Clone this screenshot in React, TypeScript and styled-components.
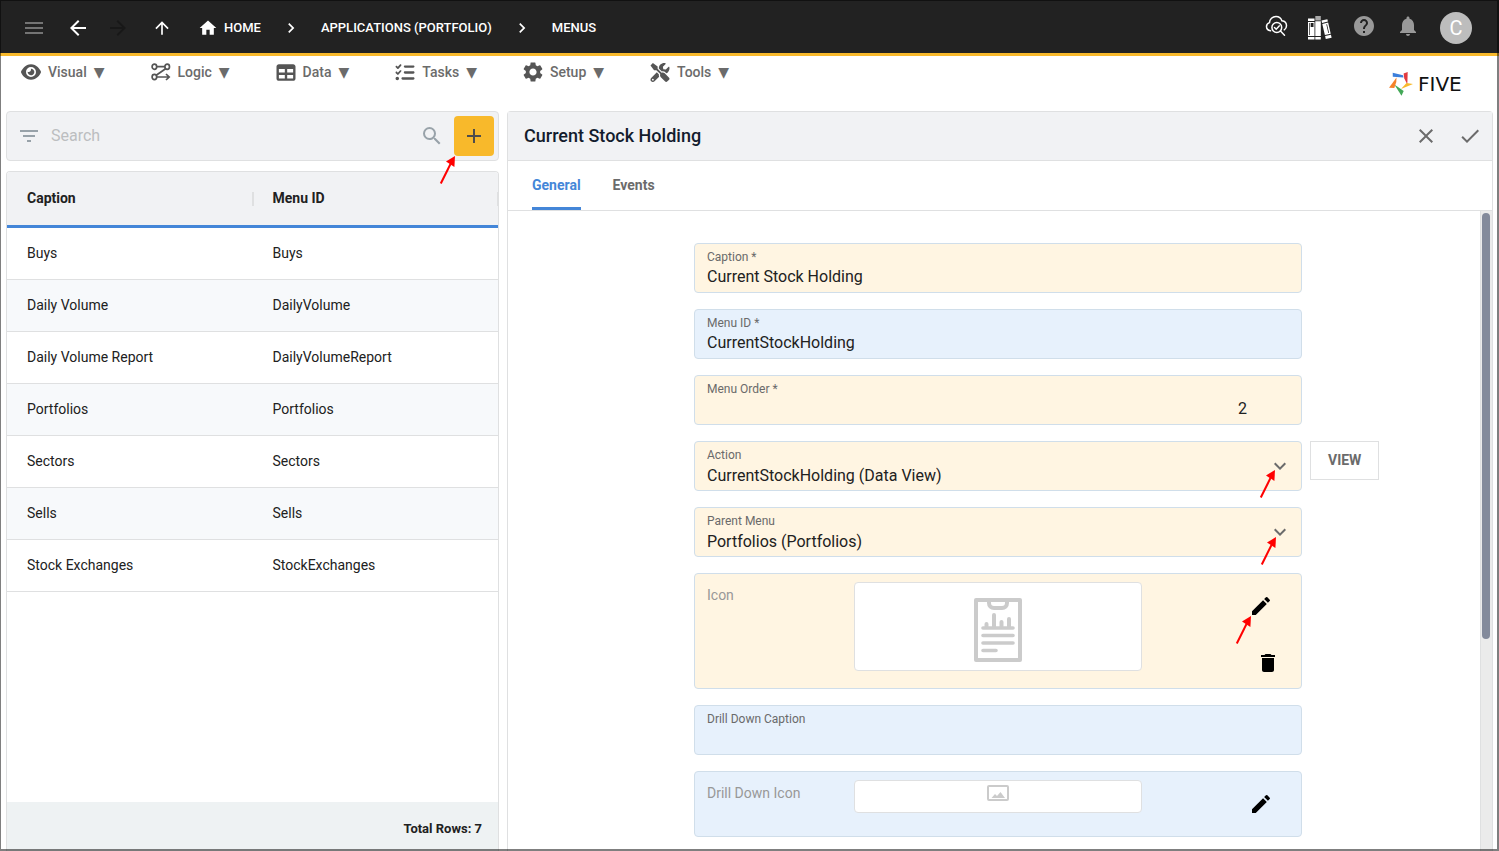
import React from "react";
import styled, { createGlobalStyle, css } from "styled-components";
import {
  MdAdd,
  MdArrowBack,
  MdArrowForward,
  MdArrowUpward,
  MdCheck,
  MdChevronRight,
  MdClose,
  MdDelete,
  MdEdit,
  MdExpandMore,
  MdFilterList,
  MdHelp,
  MdHome,
  MdMenu,
  MdNotifications,
  MdSearch,
  MdSettings,
} from "react-icons/md";
import { FaEye, FaListCheck, FaTable } from "react-icons/fa6";
import { FaTools } from "react-icons/fa";

const color = {
  bar: "#222222",
  amber: "#f8b92b",
  blue: "#4486d8",
  panel: "#f1f2f4",
  line: "#dfe0e1",
  text: "#212121",
  muted: "#6b6b6b",
  icon: "#555555",
  cream: "#fff5e2",
  sky: "#e7f1fc",
  fieldLine: "#d0deea",
};

const GlobalStyle = createGlobalStyle`
  *, *::before, *::after { box-sizing: border-box; }
  body {
    margin: 0;
    background: #fff;
    color: ${color.text};
    font-family: Roboto, "Liberation Sans", sans-serif;
    font-size: 14px;
  }
  button, input, select { font: inherit; color: inherit; }
  svg { display: block; flex: none; }
`;

const Page = styled.div`
  display: flex;
  flex-direction: column;
  height: 100vh;
  overflow: hidden;
`;

const WindowFrame = styled.div`
  position: fixed;
  inset: 0;
  z-index: 10;
  border: solid rgba(0, 0, 0, 0.5);
  border-width: 1px 2px 2px 1px;
  pointer-events: none;
`;

const PlainButton = styled.button`
  display: flex;
  align-items: center;
  justify-content: center;
  padding: 0;
  border: 0;
  background: none;
  cursor: pointer;
`;

/* ---------- top bar ---------- */

const TopBar = styled.header`
  display: flex;
  flex: none;
  align-items: center;
  justify-content: space-between;
  height: 56px;
  padding: 3px 27px 0 22px;
  border-bottom: 3px solid ${color.amber};
  background: ${color.bar};
  color: #fff;
`;

const BarGroup = styled.div`
  display: flex;
  align-items: center;
  gap: 20px;
`;

const HistoryGroup = styled.div`
  display: flex;
  gap: 16px;
`;

const BarButton = styled(PlainButton)<{ $tone?: string }>`
  width: 24px;
  height: 24px;
  color: ${(p) => p.$tone ?? "#fff"};
`;

const Crumbs = styled.nav`
  display: flex;
  align-items: center;
  gap: 20px;
  margin-left: 4px;
`;

const Crumb = styled.a`
  display: flex;
  align-items: center;
  gap: 6px;
  color: #fff;
  font-size: 13px;
  font-weight: 500;
  line-height: 20px;
  text-decoration: none;
`;

const Avatar = styled(PlainButton)`
  width: 32px;
  height: 32px;
  border-radius: 50%;
  background: #bdbdbd;
  color: #fff;
  font-size: 20px;
`;

const BarTools = styled(BarGroup)`
  ${BarButton} {
    margin-bottom: 4px;
  }
`;

/* ---------- menu bar ---------- */

const MenuBar = styled.div`
  display: flex;
  flex: none;
  justify-content: space-between;
  height: 55px;
  padding: 6px 23px 0 21px;
`;

const MenuList = styled.nav`
  display: flex;
  align-items: flex-start;
  gap: 46px;
`;

const MenuButton = styled(PlainButton)`
  gap: 7px;
  height: 20px;
  color: ${color.muted};
  font-weight: 500;
  line-height: 20px;

  svg {
    width: 20px;
    color: ${color.icon};
  }
`;

const Caret = styled.span`
  font-family: "DejaVu Sans", sans-serif;
`;

const Logo = styled.a`
  display: flex;
  align-items: center;
  gap: 5px;
  height: 24px;
  margin-top: 10px;
  color: #111;
  text-decoration: none;
`;

const LogoText = styled.span`
  width: 58px;
  font-family: "DejaVu Sans", sans-serif;
  font-size: 20px;
  line-height: 24px;
`;

/* ---------- columns ---------- */

const Columns = styled.main`
  display: grid;
  flex: 1;
  grid-template-columns: minmax(0, 1fr) minmax(0, 2fr);
  gap: 8px;
  min-height: 0;
  padding: 0 6px;
`;

const ListColumn = styled.section`
  display: flex;
  flex-direction: column;
  gap: 10px;
  min-height: 0;
`;

const SearchBar = styled.div`
  position: relative;
  display: flex;
  flex: none;
  align-items: center;
  gap: 10px;
  height: 50px;
  padding: 0 4px 0 10px;
  border: 1px solid ${color.line};
  border-radius: 4px;
  background: ${color.panel};
  color: #98a2a9;
`;

const SearchInput = styled.input`
  flex: 1;
  min-width: 0;
  padding: 0 0 2px;
  border: 0;
  outline: 0;
  background: none;
  color: ${color.text};
  font-size: 16px;

  &::placeholder {
    color: #bcbec0;
    opacity: 1;
  }
`;

const AddButton = styled(PlainButton)`
  width: 40px;
  height: 40px;
  border-radius: 4px;
  background: ${color.amber};
  color: #4d4d4d;
`;

const ListPanel = styled.div`
  display: flex;
  flex: 1;
  flex-direction: column;
  justify-content: space-between;
  min-height: 0;
  border: 1px solid ${color.line};
  border-bottom: 0;
  border-radius: 4px 4px 0 0;
  overflow: hidden;
`;

const Table = styled.table`
  width: 100%;
  border-collapse: separate;
  border-spacing: 0;
  table-layout: fixed;
`;

const HeadCell = styled.th`
  position: relative;
  height: 56px;
  padding: 0 20px 2px;
  border-bottom: 3px solid ${color.blue};
  background: ${color.panel};
  font-weight: 700;
  text-align: left;

  &::after {
    content: "";
    position: absolute;
    z-index: 1;
    top: 20px;
    right: -1px;
    width: 2px;
    height: 14px;
    background: ${color.line};
  }
`;

const BodyRow = styled.tr`
  &:nth-child(even) {
    background: #f7f9fb;
  }
`;

const Cell = styled.td`
  height: 52px;
  padding: 0 20px 2px;
  border-bottom: 1px solid ${color.line};
`;

const ListFooter = styled.div`
  display: flex;
  flex: none;
  align-items: center;
  justify-content: flex-end;
  height: 49px;
  padding: 4px 16px 0;
  background: #eef2f3;
  font-size: 13px;
  font-weight: 700;
`;

/* ---------- detail panel ---------- */

const Detail = styled.section`
  display: flex;
  flex-direction: column;
  min-height: 0;
  border: 1px solid ${color.line};
  border-bottom: 0;
  border-radius: 4px 4px 0 0;
`;

const DetailHeader = styled.div`
  display: flex;
  flex: none;
  align-items: center;
  justify-content: space-between;
  height: 49px;
  padding: 0 10px 0 16px;
  border-bottom: 1px solid ${color.line};
  background: ${color.panel};
`;

const Title = styled.h1`
  margin: 0;
  padding-bottom: 2px;
  color: #131c2d;
  font-size: 18px;
  font-weight: 500;
`;

const HeaderActions = styled.div`
  display: flex;
  gap: 20px;
`;

const HeaderButton = styled(PlainButton)`
  color: ${color.muted};
`;

const Tabs = styled.div`
  display: flex;
  flex: none;
  gap: 32px;
  height: 50px;
  padding: 0 24px;
  border-bottom: 1px solid ${color.line};
`;

const Tab = styled(PlainButton)<{ $active?: boolean }>`
  padding-top: 1px;
  border-bottom: 3px solid transparent;
  color: ${color.muted};
  font-weight: 700;
  ${(p) =>
    p.$active &&
    css`
      border-bottom-color: ${color.blue};
      color: ${color.blue};
    `}
`;

const DetailBody = styled.div`
  display: flex;
  flex: 1;
  min-height: 0;
`;

const Form = styled.form`
  display: flex;
  flex: 1;
  flex-direction: column;
  gap: 16px;
  min-width: 0;
  padding: 32px 0 16px 8px;
  overflow-y: auto;
  scrollbar-width: none;
`;

const FormRow = styled.div`
  display: grid;
  flex: none;
  grid-template-columns: 1fr minmax(0, 608px) 1fr;
  column-gap: 8px;
  align-items: start;

  > :first-child {
    grid-column: 2;
  }
`;

const ScrollTrack = styled.div`
  flex: none;
  width: 12px;
  padding: 2px 1px;
  border-left: 1px solid ${color.line};
  background: #ebebeb;
`;

const ScrollThumb = styled.div`
  width: 8px;
  height: 67%;
  border-radius: 4px;
  background: #838a9b;
`;

const fieldBox = css<{ $tint: string }>`
  position: relative;
  border: 1px solid ${color.fieldLine};
  border-radius: 4px;
  background: ${(p) => p.$tint};
`;

const Field = styled.div<{ $tint: string }>`
  ${fieldBox}
  display: flex;
  flex-direction: column;
  height: 50px;
  padding: 5px 12px 0;
`;

const FieldLabel = styled.label`
  color: #6a6a6a;
  font-size: 12px;
  line-height: 16px;
`;

const valueText = css`
  width: 100%;
  height: 24px;
  padding: 0;
  border: 0;
  outline: 0;
  background: none;
  font-size: 16px;
  line-height: 24px;
`;

const TextInput = styled.input<{ $numeric?: boolean }>`
  ${valueText}
  ${(p) =>
    p.$numeric &&
    css`
      padding-right: 42px;
      text-align: right;
    `}
`;

const Select = styled.select`
  ${valueText}
  height: 26px;
  appearance: none;
`;

const SelectChevron = styled.span`
  position: absolute;
  top: 12px;
  right: 9px;
  color: ${color.muted};
  pointer-events: none;
`;

const ViewButton = styled.button`
  justify-self: start;
  height: 39px;
  padding: 0 17px 2px;
  border: 1px solid ${color.line};
  background: #fff;
  color: ${color.muted};
  font-weight: 700;
  line-height: 20px;
  cursor: pointer;
`;

const ImageField = styled.div<{ $tint: string; $tall?: boolean }>`
  ${fieldBox}
  display: grid;
  grid-template-columns: 1fr 288px 1fr;
  align-items: start;
  height: ${(p) => (p.$tall ? 116 : 66)}px;
  padding: 8px 12px;
`;

const ImageLabel = styled.span`
  padding-top: 3px;
  color: #989898;
  line-height: 20px;
`;

const ImageBox = styled.div<{ $tall?: boolean }>`
  display: flex;
  justify-content: center;
  height: ${(p) => (p.$tall ? 89 : 33)}px;
  padding-top: ${(p) => (p.$tall ? 14 : 4)}px;
  border: 1px solid ${color.line};
  border-radius: 4px;
  background: #fff;
  color: #cbcbcb;
`;

const ImageActions = styled.div`
  display: flex;
  flex-direction: column;
  align-items: flex-end;
  gap: 24px;
  padding: 4px 8px 0 0;
`;

const EditButton = styled(PlainButton)`
  width: 40px;
  height: 40px;
  color: #000;
`;

const DeleteButton = styled(PlainButton)`
  width: 26px;
  height: 26px;
  color: #000;
`;

/* ---------- drawings ---------- */

const ArrowSvg = styled.svg<{ $top: number; $right: number }>`
  position: absolute;
  top: ${(p) => p.$top}px;
  right: ${(p) => p.$right}px;
  z-index: 2;
  pointer-events: none;
`;

const Arrow = ({ top, right }: { top: number; right: number }) => (
  <ArrowSvg $top={top} $right={right} width="16" height="28" viewBox="0 0 16 28" aria-hidden="true">
    <path d="M1.800 27.500 11.500 8" stroke="#ff0000" strokeWidth="2" />
    <path d="M16 0 7 5.500 15.400 11z" fill="#ff0000" />
  </ArrowSvg>
);

const LogicIcon = () => (
  <svg width="20" height="18" viewBox="0 0 20 18" fill="none" stroke="currentColor" strokeWidth="1.700">
    <ellipse cx="3.400" cy="3.700" rx="2.300" ry="2.600" />
    <ellipse cx="16.200" cy="3.700" rx="2.300" ry="2.600" />
    <ellipse cx="3.400" cy="14" rx="2.300" ry="2.600" />
    <path d="M5.700 3.700H14M14.600 5.800 5.200 12.300M5.700 14H18M15 11l3.200 3-3.200 3" />
  </svg>
);

const CloudSearchIcon = () => (
  <svg width="24" height="24" viewBox="-0.5 0.5 24 24" fill="none" stroke="currentColor" strokeWidth="1.500" strokeLinecap="round">
    <path d="M6 17.300C3.700 17 2 15.300 2 13.100c0-1.900 1.300-3.500 3-4C5.100 5.700 8 3 11.500 3c2.800 0 5.100 1.800 5.900 4.300 2.600.3 4.600 2.300 4.600 4.900 0 1.700-.8 3.200-2.200 4.100" />
    <circle cx="12.300" cy="14" r="4.900" />
    <path d="m10 14 1.700 1.700 3-3.300M16 17.600l4 4.200" />
  </svg>
);

const BooksIcon = () => (
  <svg width="26" height="30" viewBox="-1 -5 26 30" fill="currentColor">
    <path d="M0 2.500h6.500V5H0zM0 6h6.500v14H0zM0 21h6.500v2.500H0z" />
    <path d="M2.700 7h2.800v4H2.700zM1.200 7h.7v12h-.7z" fill="#222" />
    <path d="M7.300 5.200h5.500V20H7.300zM7.300 21h5.500v2.500H7.300z" />
    <path d="M7.300 0h5.500v4.500H7.300z" fill="#aaa" />
    <g transform="translate(13.500 4.500) rotate(-13)">
      <path d="M0 0h6v2.500H0zM0 3.500h6v11.500H0zM0 16h6v3H0z" />
      <path d="M3.800 4.800h.8v9h-.8z" fill="#222" />
    </g>
  </svg>
);

const PinwheelLogo = () => (
  <svg width="24" height="24" viewBox="0 0 24 24">
    <path d="M3.700.7 14 3.200l.5 2.300-10.700-.8z" fill="#3c7fdb" />
    <path d="M14.600 1.600 18.700 0l-.4 12.500-3-6z" fill="#e23a3f" />
    <path d="M17.500 11 24 12 12 17z" fill="#f8b92b" />
    <path d="M5.300 12.500 14.700 19l-2.200 4.800z" fill="#43a857" />
    <path d="M7.500 5.500 7.300 10 5.300 16 0 15.800z" fill="#f5822a" />
  </svg>
);

const ReportImage = () => (
  <svg width="50" height="66" viewBox="0 0 50 66" fill="none" stroke="currentColor" strokeWidth="4" strokeLinecap="round" strokeLinejoin="round">
    <path d="M3 3h44v60H3z" />
    <path d="M16 3v3c0 3 2 5 5 5h8c3 0 5-2 5-5V3" strokeLinecap="butt" />
    <path d="M10 31h30M10 38.500h30M10 46h30M10 53.500h13" strokeWidth="3.600" />
    <path d="M13.500 30v-3M21 30V18M28.500 30v-5M36 30v-8" />
  </svg>
);

const PictureIcon = () => (
  <svg width="22" height="16" viewBox="0 0 22 16">
    <rect x="1" y="1" width="20" height="14" rx="1" fill="none" stroke="currentColor" strokeWidth="2" />
    <path d="M4.500 13 8 9l2 2 3.500-4 4.500 6z" fill="currentColor" />
  </svg>
);

/* ---------- data ---------- */

const menus = [
  { label: "Visual", icon: <FaEye size={18} /> },
  { label: "Logic", icon: <LogicIcon /> },
  { label: "Data", icon: <FaTable size={19} /> },
  { label: "Tasks", icon: <FaListCheck size={19} /> },
  { label: "Setup", icon: <MdSettings size={24} viewBox="2 2 20 20" /> },
  { label: "Tools", icon: <FaTools size={19} /> },
];

const rows = [
  ["Buys", "Buys"],
  ["Daily Volume", "DailyVolume"],
  ["Daily Volume Report", "DailyVolumeReport"],
  ["Portfolios", "Portfolios"],
  ["Sectors", "Sectors"],
  ["Sells", "Sells"],
  ["Stock Exchanges", "StockExchanges"],
];

export default function App() {
  return (
    <Page>
      <GlobalStyle />
      <WindowFrame />
      <TopBar>
        <BarGroup>
          <BarButton aria-label="Menu" $tone="#747474"><MdMenu size={24} /></BarButton>
          <HistoryGroup>
            <BarButton aria-label="Back"><MdArrowBack size={24} /></BarButton>
            <BarButton aria-label="Forward" $tone="#181818"><MdArrowForward size={24} /></BarButton>
          </HistoryGroup>
          <BarButton aria-label="Up"><MdArrowUpward size={20} /></BarButton>
          <Crumbs>
            <Crumb href="#home"><MdHome size={20} />HOME</Crumb>
            <MdChevronRight size={20} />
            <Crumb href="#applications">APPLICATIONS (PORTFOLIO)</Crumb>
            <MdChevronRight size={20} />
            <Crumb href="#menus">MENUS</Crumb>
          </Crumbs>
        </BarGroup>
        <BarTools>
          <BarButton aria-label="Inspect"><CloudSearchIcon /></BarButton>
          <BarButton aria-label="Documentation"><BooksIcon /></BarButton>
          <BarButton aria-label="Help" $tone="#999"><MdHelp size={24} /></BarButton>
          <BarButton aria-label="Notifications" $tone="#999"><MdNotifications size={24} /></BarButton>
          <Avatar>C</Avatar>
        </BarTools>
      </TopBar>

      <MenuBar>
        <MenuList>
          {menus.map((m) => (
            <MenuButton key={m.label}>
              {m.icon}
              {m.label}
              <Caret>▼</Caret>
            </MenuButton>
          ))}
        </MenuList>
        <Logo href="#five">
          <PinwheelLogo />
          <LogoText>FIVE</LogoText>
        </Logo>
      </MenuBar>

      <Columns>
        <ListColumn>
          <SearchBar>
            <MdFilterList size={24} />
            <SearchInput type="text" placeholder="Search" aria-label="Search" />
            <MdSearch size={24} />
            <AddButton aria-label="Add"><MdAdd size={24} /></AddButton>
            <Arrow top={44} right={43} />
          </SearchBar>
          <ListPanel>
            <Table>
              <thead>
                <tr>
                  <HeadCell>Caption</HeadCell>
                  <HeadCell>Menu ID</HeadCell>
                </tr>
              </thead>
              <tbody>
                {rows.map(([caption, id]) => (
                  <BodyRow key={id}>
                    <Cell>{caption}</Cell>
                    <Cell>{id}</Cell>
                  </BodyRow>
                ))}
              </tbody>
            </Table>
            <ListFooter>Total Rows: {rows.length}</ListFooter>
          </ListPanel>
        </ListColumn>

        <Detail>
          <DetailHeader>
            <Title>Current Stock Holding</Title>
            <HeaderActions>
              <HeaderButton aria-label="Cancel"><MdClose size={24} /></HeaderButton>
              <HeaderButton aria-label="Save"><MdCheck size={24} /></HeaderButton>
            </HeaderActions>
          </DetailHeader>
          <Tabs>
            <Tab $active>General</Tab>
            <Tab>Events</Tab>
          </Tabs>
          <DetailBody>
            <Form>
              <FormRow>
                <Field $tint={color.cream}>
                  <FieldLabel htmlFor="caption">Caption *</FieldLabel>
                  <TextInput id="caption" type="text" defaultValue="Current Stock Holding" />
                </Field>
              </FormRow>
              <FormRow>
                <Field $tint={color.sky}>
                  <FieldLabel htmlFor="menu-id">Menu ID *</FieldLabel>
                  <TextInput id="menu-id" type="text" defaultValue="CurrentStockHolding" />
                </Field>
              </FormRow>
              <FormRow>
                <Field $tint={color.cream}>
                  <FieldLabel htmlFor="menu-order">Menu Order *</FieldLabel>
                  <TextInput id="menu-order" type="text" inputMode="numeric" $numeric defaultValue="2" />
                </Field>
              </FormRow>
              <FormRow>
                <Field $tint={color.cream}>
                  <FieldLabel htmlFor="action">Action</FieldLabel>
                  <Select id="action">
                    <option>CurrentStockHolding (Data View)</option>
                  </Select>
                  <SelectChevron><MdExpandMore size={24} /></SelectChevron>
                  <Arrow top={28} right={26} />
                </Field>
                <ViewButton type="button">VIEW</ViewButton>
              </FormRow>
              <FormRow>
                <Field $tint={color.cream}>
                  <FieldLabel htmlFor="parent-menu">Parent Menu</FieldLabel>
                  <Select id="parent-menu">
                    <option>Portfolios (Portfolios)</option>
                  </Select>
                  <SelectChevron><MdExpandMore size={24} /></SelectChevron>
                  <Arrow top={29} right={25} />
                </Field>
              </FormRow>
              <FormRow>
                <ImageField $tint={color.cream} $tall>
                  <ImageLabel>Icon</ImageLabel>
                  <ImageBox $tall><ReportImage /></ImageBox>
                  <ImageActions>
                    <EditButton type="button" aria-label="Edit icon"><MdEdit size={24} /></EditButton>
                    <DeleteButton type="button" aria-label="Delete icon"><MdDelete size={24} /></DeleteButton>
                  </ImageActions>
                  <Arrow top={42} right={50} />
                </ImageField>
              </FormRow>
              <FormRow>
                <Field $tint={color.sky}>
                  <FieldLabel htmlFor="drill-caption">Drill Down Caption</FieldLabel>
                  <TextInput id="drill-caption" type="text" />
                </Field>
              </FormRow>
              <FormRow>
                <ImageField $tint={color.sky}>
                  <ImageLabel>Drill Down Icon</ImageLabel>
                  <ImageBox><PictureIcon /></ImageBox>
                  <ImageActions>
                    <EditButton type="button" aria-label="Edit drill down icon"><MdEdit size={24} /></EditButton>
                  </ImageActions>
                </ImageField>
              </FormRow>
            </Form>
            <ScrollTrack>
              <ScrollThumb />
            </ScrollTrack>
          </DetailBody>
        </Detail>
      </Columns>
    </Page>
  );
}
